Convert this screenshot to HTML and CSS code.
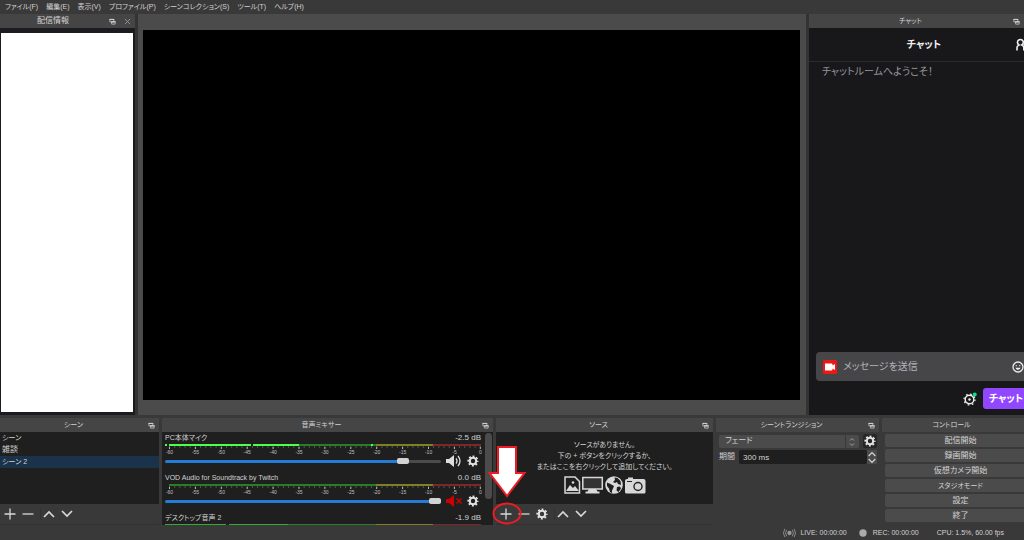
FILE: index.html
```html
<!DOCTYPE html>
<html lang="ja">
<head>
<meta charset="utf-8">
<title>配信スタジオ</title>
<link rel="stylesheet" href="styles.css">
</head>
<body>
<svg class="defs" aria-hidden="true">
  <symbol id="float" viewBox="0 0 8 8"><path d="M1 1.500h4.500v3h-4.500zM3 4h4v3h-4z" fill="#464546" stroke="#bbb" stroke-width="1"/><path d="M.5 1h5.500v1.300h-5.500zM2.500 3.700h5v1.300h-5z" fill="#ccc"/></symbol>
  <symbol id="plus" viewBox="0 0 12 12"><path d="M6 .5v11M.5 6h11" stroke="#d8d8d8" stroke-width="1.300"/></symbol>
  <symbol id="minus" viewBox="0 0 12 12"><path d="M.5 6h11" stroke="#d8d8d8" stroke-width="1.300"/></symbol>
  <symbol id="up" viewBox="0 0 12 12"><path d="M1 9l5-5 5 5" fill="none" stroke="#d8d8d8" stroke-width="1.700"/></symbol>
  <symbol id="down" viewBox="0 0 12 12"><path d="M1 3l5 5 5-5" fill="none" stroke="#d8d8d8" stroke-width="1.700"/></symbol>
  <symbol id="gear" viewBox="0 0 12 12"><circle cx="6" cy="6" r="3.200" fill="none" stroke="#e2e2e2" stroke-width="2"/><circle cx="6" cy="6" r="4.700" fill="none" stroke="#e2e2e2" stroke-width="1.800" stroke-dasharray="1.900 1.791" stroke-dashoffset="1"/></symbol>
</svg>
<div class="app">
  <nav class="menu">
    <a href="#">ファイル(F)</a><a href="#">編集(E)</a><a href="#">表示(V)</a><a href="#">プロファイル(P)</a><a href="#">シーンコレクション(S)</a><a href="#">ツール(T)</a><a href="#">ヘルプ(H)</a>
  </nav>

  <main class="upper">
    <section class="dock info">
      <header class="title"><h2>配信情報</h2><button class="mini" aria-label="切り離す"><svg><use href="#float"/></svg></button><button class="mini" aria-label="閉じる"><svg viewBox="0 0 8 8"><path d="M1 1l6 6M7 1l-6 6" stroke="#999" stroke-width="1"/></svg></button></header>
      <div class="info-body"><div class="blank"></div></div>
    </section>
    <section class="preview"><div class="screen"></div></section>
    <section class="dock chat">
      <header class="title kana"><h2>チャット</h2><button class="mini" aria-label="切り離す"><svg><use href="#float"/></svg></button></header>
      <div class="chat-body">
        <div class="chat-head"><h3>チャット</h3>
          <button class="people" aria-label="ユーザー"><svg viewBox="0 0 14 14"><path d="M2 12.500V9.500q0-1.500 2-2.500a2.900 2.900 0 1 1 2.800 0q2 1 2 2.500V12.500M9 1.800a2.600 2.600 0 0 1 1 4.800q2.500 1.200 2.500 3V12" fill="none" stroke="#eee" stroke-width="1.600"/></svg></button>
        </div>
        <p class="welcome">チャットルームへようこそ！</p>
        <div class="composer">
          <label class="message">
            <svg class="cam" viewBox="0 0 14 14"><rect width="14" height="14" rx="1.500" fill="#e91916"/><path d="M2 3.500h6.500q1 0 1 1v1L12 4v6L9.500 8.600v1q0 1-1 1H2z" fill="#fff"/></svg>
            <input type="text" placeholder="メッセージを送信" aria-label="メッセージを送信">
            <svg class="smile" viewBox="0 0 12 12"><circle cx="6" cy="6" r="5" fill="none" stroke="#eee" stroke-width="1.300"/><path d="M3.700 4h1v1.200h-1zM7.300 4h1v1.200h-1zM3.500 6.800h5q-.5 2-2.500 2t-2.500-2" fill="#eee"/></svg>
          </label>
          <div class="send">
            <button class="chatgear" aria-label="チャット設定"><svg viewBox="0 0 14 14"><circle cx="6.500" cy="7.500" r="4.300" fill="none" stroke="#eee" stroke-width="1.400"/><circle cx="6.500" cy="7.500" r="5.500" fill="none" stroke="#eee" stroke-width="1.200" stroke-dasharray="1.700 2.620"/><circle cx="6.500" cy="7.500" r="1.200" fill="#eee"/><circle cx="11.700" cy="2.400" r="2" fill="#00e78a"/></svg></button>
            <button class="primary">チャット</button>
          </div>
        </div>
      </div>
    </section>
  </main>

  <div class="lower">
    <section class="dock scenes">
      <header class="title kana"><h2>シーン</h2><button class="mini" aria-label="切り離す"><svg><use href="#float"/></svg></button></header>
      <ul class="list"><li class="kana">シーン</li><li>雑談</li><li class="selected kana">シーン 2</li></ul>
      <div class="tools"><button aria-label="追加"><svg><use href="#plus"/></svg></button><button aria-label="削除"><svg><use href="#minus"/></svg></button><i></i><button aria-label="上へ"><svg><use href="#up"/></svg></button><button aria-label="下へ"><svg><use href="#down"/></svg></button></div>
    </section>

    <section class="dock mixer">
      <header class="title kana"><h2>音声ミキサー</h2><button class="mini" aria-label="切り離す"><svg><use href="#float"/></svg></button></header>
      <div class="mix-body">
        <div class="channels">
          <div class="channel">
            <div class="name"><label for="v1" class="kana">PC本体マイク</label><span>-2.5 dB</span></div>
            <svg class="meter" viewBox="0 0 316 5" preserveAspectRatio="none"><path d="M4 1h207" stroke="#267f26" stroke-width="2"/><path d="M211 1h57" stroke="#7f7f26" stroke-width="2"/><path d="M268 1h48" stroke="#7f2626" stroke-width="2"/><path d="M0 1h2M4 1h82M88 1h46M206 1h2" stroke="#4cff4c" stroke-width="2"/><path d="M86 1h2" stroke="#111" stroke-width="2"/><path d="M4 3h312" stroke="#888" stroke-width="1" stroke-dasharray="1 4.180"/><path d="M4 4h312" stroke="#bbb" stroke-width="2" stroke-dasharray="1 24.900"/></svg>
            <div class="scale"><span>-60</span><span>-55</span><span>-50</span><span>-45</span><span>-40</span><span>-35</span><span>-30</span><span>-25</span><span>-20</span><span>-15</span><span>-10</span><span>-5</span><span>0</span></div>
            <div class="fader"><input id="v1" class="v1" type="range" min="0" max="100" value="88"><button aria-label="ミュート"><svg class="spk" viewBox="0 0 16 12"><path d="M0 4h3l5-4v12l-5-4h-3z" fill="#ddd"/><path d="M10 3.500q2 2.500 0 5M12 1q4 5 0 10" fill="none" stroke="#ddd" stroke-width="1.300"/></svg></button><button aria-label="音声設定"><svg class="cog"><use href="#gear"/></svg></button></div>
          </div>
          <div class="channel">
            <div class="name"><label for="v2" class="small">VOD Audio for Soundtrack by Twitch</label><span>0.0 dB</span></div>
            <svg class="meter" viewBox="0 0 316 5" preserveAspectRatio="none"><path d="M4 1h207" stroke="#267f26" stroke-width="2"/><path d="M211 1h57" stroke="#7f7f26" stroke-width="2"/><path d="M268 1h48" stroke="#7f2626" stroke-width="2"/><path d="M4 3h312" stroke="#888" stroke-width="1" stroke-dasharray="1 4.180"/><path d="M4 4h312" stroke="#bbb" stroke-width="2" stroke-dasharray="1 24.900"/></svg>
            <div class="scale"><span>-60</span><span>-55</span><span>-50</span><span>-45</span><span>-40</span><span>-35</span><span>-30</span><span>-25</span><span>-20</span><span>-15</span><span>-10</span><span>-5</span><span>0</span></div>
            <div class="fader"><input id="v2" class="v2" type="range" min="0" max="100" value="100"><button aria-label="ミュート解除"><svg class="spk" viewBox="0 0 16 12"><path d="M0 4h3l5-4v12l-5-4h-3z" fill="#d00000"/><path d="M10.500 3.500l5 5M15.500 3.500l-5 5" stroke="#d00000" stroke-width="1.400"/></svg></button><button aria-label="音声設定"><svg class="cog"><use href="#gear"/></svg></button></div>
          </div>
          <div class="channel">
            <div class="name"><span class="kana">デスクトップ音声 2</span><span>-1.9 dB</span></div>
            <svg class="meter" viewBox="0 0 316 5" preserveAspectRatio="none"><path d="M0 1h61M64 1h59" stroke="#35a835" stroke-width="2"/><path d="M123 1h88" stroke="#267f26" stroke-width="2"/><path d="M211 1h57" stroke="#7f7f26" stroke-width="2"/><path d="M268 1h48" stroke="#7f2626" stroke-width="2"/></svg>
          </div>
        </div>
        <div class="scroll"></div>
      </div>
    </section>

    <section class="dock sources">
      <header class="title kana"><h2>ソース</h2><button class="mini" aria-label="切り離す"><svg><use href="#float"/></svg></button></header>
      <div class="empty">
        <p class="kana">ソースがありません。<br>下の + ボタンをクリックするか、<br>またはここを右クリックして追加してください。</p>
        <svg class="kinds" viewBox="0 0 82 18">
          <path d="M1 1h10l4.500 4.500V17H1z" fill="none" stroke="#d8d8d8" stroke-width="1.500"/><path d="M2 15l4-6 3 3 2-2 4 5z" fill="#d8d8d8"/><circle cx="9" cy="6.500" r="1.300" fill="#d8d8d8"/>
          <path d="M18.800 1.500h19.500v11.500h-19.500z" fill="#333" stroke="#d8d8d8" stroke-width="1.500"/><path d="M25 13h7l1.500 2.500h2V17.500H21.500v-2h2z" fill="#d8d8d8"/>
          <circle cx="50" cy="9" r="8.800" fill="#d8d8d8"/><path d="M50.500 1.500l3 .5 3 3 .5 4-3-1-1-2-2 1-2-1 2-2zM43 6.500l3.500 1.500 3.500 2-1 2.500-1 2v2.500l-2-1-1-3.500-2-2.500zM53 11l3-.5 1 2-2.500 3.500-2-1.500z" fill="#1f1f1f"/>
          <path d="M61 5q0-2 2-2h1V1.500h5V3h10.500q2 0 2 2v11q0 1.500-1.500 1.500H62.500q-1.500 0-1.500-1.500z" fill="#d8d8d8"/><circle cx="74" cy="10.500" r="4" fill="#d8d8d8" stroke="#222" stroke-width="1.400"/><path d="M63 5.500h5" stroke="#222"/>
        </svg>
      </div>
      <div class="tools"><button aria-label="追加"><svg><use href="#plus"/></svg></button><button aria-label="削除"><svg><use href="#minus"/></svg></button><button aria-label="設定"><svg><use href="#gear"/></svg></button><i></i><button aria-label="上へ"><svg><use href="#up"/></svg></button><button aria-label="下へ"><svg><use href="#down"/></svg></button></div>
      <svg class="pointer" viewBox="0 0 42 82"><path d="M12 3h18v26h8.500L21 52 3.500 29H12z" fill="#fff" stroke="#ed1c24" stroke-width="2"/><ellipse cx="21" cy="69.500" rx="13.500" ry="10" fill="none" stroke="#ed1c24" stroke-width="2"/></svg>
    </section>

    <section class="dock transitions">
      <header class="title kana"><h2>シーントランジション</h2><button class="mini" aria-label="切り離す"><svg><use href="#float"/></svg></button></header>
      <div class="form">
        <div class="row"><div class="picker"><select aria-label="トランジション"><option>フェード</option></select><svg class="arrows" viewBox="0 0 6 10"><path d="M1 3.500l2-2 2 2M1 6.500l2 2 2-2" fill="none" stroke="#aaa" stroke-width=".9"/></svg></div><button class="square" aria-label="設定"><svg><use href="#gear"/></svg></button></div>
        <div class="row"><label for="dur">期間</label><input id="dur" type="text" value="300 ms"><div class="spin"><button aria-label="増やす"><svg><use href="#up"/></svg></button><button aria-label="減らす"><svg><use href="#down"/></svg></button></div></div>
      </div>
    </section>

    <section class="dock controls">
      <header class="title kana"><h2>コントロール</h2></header>
      <div class="buttons"><button>配信開始</button><button>録画開始</button><button>仮想カメラ開始</button><button class="kana">スタジオモード</button><button>設定</button><button>終了</button></div>
    </section>
  </div>

  <footer class="status small">
    <span class="live"><svg viewBox="0 0 14 10"><circle cx="7" cy="5" r="2.300" fill="#999"/><path d="M4 1.500q-2.500 3.500 0 7M10 1.500q2.500 3.500 0 7M2 .5q-3 4.500 0 9M12 .5q3 4.500 0 9" fill="none" stroke="#999" stroke-width=".9"/></svg>LIVE: 00:00:00</span>
    <span class="rec"><svg viewBox="0 0 8 8"><circle cx="4" cy="4" r="3.700" fill="#aaa"/></svg>REC: 00:00:00</span>
    <span>CPU: 1.5%, 60.00 fps</span>
  </footer>
</div>
</body>
</html>
```
FILE: styles.css
```css
* { box-sizing: border-box; }
body { margin: 0; background: #3a393a; color: #d2d2d2; font: 8px/12px "Liberation Sans", "Noto Sans CJK JP", sans-serif; font-feature-settings: "palt"; }
button, input, select { font: inherit; color: inherit; border: 0; margin: 0; padding: 0; background: none; font-feature-settings: inherit; }
h2, h3, p, ul { margin: 0; padding: 0; font-weight: normal; font-size: inherit; }
button { display: flex; align-items: center; justify-content: center; }
svg { display: block; }
.kana, .small { font-size: 7px; }
.defs { position: absolute; width: 0; height: 0; }
.app { display: flex; flex-direction: column; height: 100vh; overflow: hidden; }

.menu { display: flex; gap: 8px; height: 14px; padding-left: 5px; font-size: 7px; }
.menu a { color: inherit; text-decoration: none; line-height: 14px; white-space: nowrap; }

.upper { display: flex; flex: 1; min-height: 0; background: #343334; }
.dock { display: flex; flex-direction: column; min-width: 0; min-height: 0; position: relative; }
.title { display: flex; align-items: center; height: 14px; flex: none; background: #464546; padding-right: 3px; }
.title h2 { flex: 1; text-align: center; white-space: nowrap; }
.mini svg { width: 7px; height: 7px; }
.mini { width: 9px; }
.info { width: 13.2%; }
.info .title { gap: 6px; padding-left: 4px; }
.info-body { flex: 1; display: flex; background: #1c1b20; padding: 5px 2px 3px 1px; }
.blank { flex: 1; background: #fff; }
.preview { flex: 1; display: flex; margin: 0 3px; padding: 16px 6px 15px 5px; background: #4c4b4c; }
.screen { flex: 1; background: #000; }
.chat { width: 21%; overflow: hidden; }
.chat-body { flex: 1; display: flex; flex-direction: column; background: #18181b; }
.chat-head { display: flex; align-items: center; height: 34px; border-bottom: 1px solid #2b2b2e; padding-left: 24px; }
.chat-head h3 { flex: 1; text-align: center; font-size: 10px; font-weight: bold; color: #efeff1; }
.people { width: 9px; justify-content: flex-start; }
.people svg { width: 14px; height: 14px; flex: none; }
.welcome { padding: 4px 13px; font-size: 10px; color: #96969d; }
.composer { margin-top: auto; padding: 0 0 6px 7px; }
.message { display: flex; align-items: center; gap: 6px; height: 29px; background: #464649; border-radius: 4px 0 0 4px; padding-left: 7px; }
.message input { flex: 1; min-width: 0; font-size: 10px; outline: 0; }
.message input::placeholder { color: #b4b4b8; opacity: 1; }
.cam { width: 14px; height: 14px; }
.smile { width: 12px; height: 12px; }
.send { display: flex; justify-content: flex-end; gap: 6px; padding-top: 7px; }
.chatgear svg { width: 14px; height: 14px; }
.primary { width: 41px; height: 21px; padding-left: 5px; background: #9147ff; border-radius: 3px 0 0 3px; color: #fff; font-size: 10px; font-weight: bold; white-space: nowrap; }

.lower { display: grid; grid-template-columns: 159fr 331fr 217fr 163fr 142fr; grid-template-rows: minmax(0, 1fr); gap: 3px; height: 107px; margin-top: 3px; flex: none; }
.scenes, .sources { background: #3a393a; border-bottom: 1px solid #323132; }
.list { flex: 1; background: #1f1f1f; list-style: none; }
.list li { height: 12px; padding-left: 2px; }
.list .selected { background: #1a334b; }
.tools { display: flex; align-items: center; height: 20px; padding-left: 4px; gap: 6px; }
.tools svg { width: 12px; height: 12px; }
.tools i { width: 1px; height: 12px; background: #333; margin: 0 -4px 0 0; }

.mix-body { flex: 1; min-height: 0; display: flex; gap: 4px; background: #1f1f1f; padding: 0 1px 0 3px; overflow: hidden; }
.channels { flex: 1; min-width: 0; }
.channel { height: 40px; }
.name { display: flex; justify-content: space-between; height: 12px; }
.meter { width: 100%; height: 5px; }
.scale { display: flex; justify-content: space-between; height: 6px; font-size: 5px; line-height: 6px; margin-right: -4px; }
.scale span { width: 9px; text-align: center; color: #c0c0c0; }
.fader { display: flex; align-items: center; height: 12px; gap: 5px; }
.fader input { flex: 1; min-width: 0; height: 8px; appearance: none; }
.fader input::-webkit-slider-runnable-track { height: 3px; border-radius: 2px; background: #247cd6; }
.fader .v1::-webkit-slider-runnable-track { background: linear-gradient(to right, #247cd6 87%, #4c4b4c 87%); }
.fader input::-webkit-slider-thumb { appearance: none; width: 12px; height: 6px; margin-top: -2px; border-radius: 2px; background: #d2d2d2; }
.spk { width: 16px; height: 12px; }
.cog { width: 12px; height: 12px; margin-right: 2px; }
.scroll { width: 7px; height: 66px; margin-top: 1px; border-radius: 4px; background: #4c4b4c; }

.empty { flex: 1; background: #1f1f1f; text-align: center; padding-top: 7px; }
.empty p { line-height: 11px; white-space: nowrap; }
.kinds { width: 82px; height: 18px; margin: 4px auto 0; }
.pointer { position: absolute; left: -10px; top: 26px; width: 42px; height: 82px; pointer-events: none; z-index: 1; }

.form { display: flex; flex-direction: column; gap: 2px; padding: 2px 2px 0 3px; }
.row { display: flex; align-items: center; gap: 4px; height: 14px; }
.row label { white-space: nowrap; }
.picker { flex: 1; position: relative; display: flex; }
.picker select { flex: 1; height: 13px; appearance: none; background: linear-gradient(to right, #4c4b4c calc(100% - 14px), #3a393a calc(100% - 14px), #3a393a calc(100% - 13px), #4c4b4c calc(100% - 13px)); border-radius: 2px; padding-left: 6px; }
.arrows { position: absolute; right: 4px; top: 2px; width: 6px; height: 10px; }
.square { width: 14px; height: 14px; background: #262626; border-radius: 2px; }
.square svg { width: 12px; height: 12px; }
.row input { flex: 1; min-width: 0; height: 14px; background: #1f1f1f; padding-left: 4px; border-radius: 2px; }
.spin { display: flex; flex-direction: column; width: 10px; margin-left: -4px; background: #4c4b4c; }
.spin button { height: 7px; }
.spin svg { width: 8px; height: 8px; }

.controls { overflow: hidden; }
.buttons { display: grid; gap: 2px; padding: 2px 0 0 3px; margin-right: -12px; }
.buttons button { height: 13px; background: #4c4b4c; border-radius: 2px; }

.status { display: flex; justify-content: flex-end; height: 15px; gap: 18px; padding-right: 20px; line-height: 16px; white-space: nowrap; }
.status span { display: flex; align-items: center; gap: 4px; }
.status .live { margin-right: -6px; }
.status .rec { gap: 6px; }
.live svg { width: 13px; height: 10px; }
.rec svg { width: 8px; height: 8px; }
```
